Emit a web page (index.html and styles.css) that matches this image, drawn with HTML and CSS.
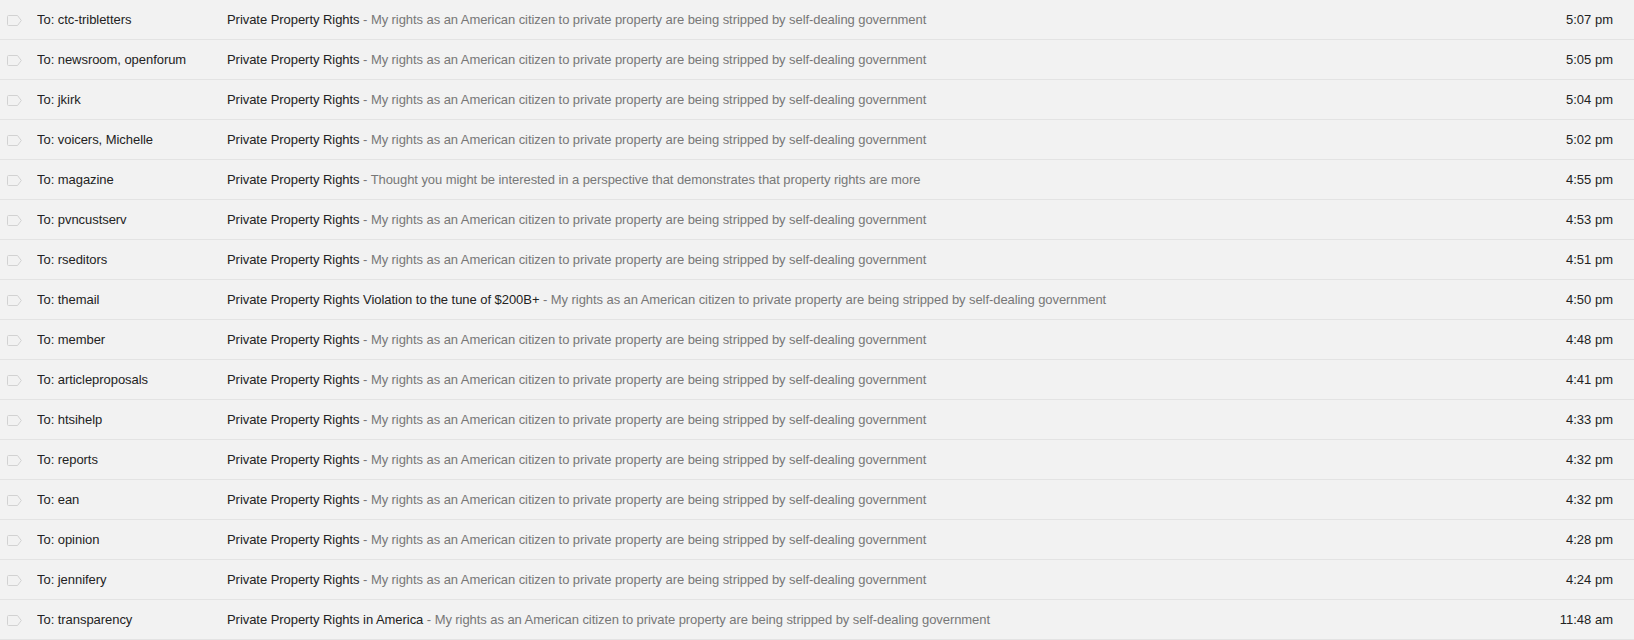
FILE: index.html
```html
<!DOCTYPE html>
<html lang="en">
<head>
    <meta charset="UTF-8">
    <title>Sent Mail</title>
    <link rel="stylesheet" href="styles.css">
</head>
<body>

    <div class="mail-list">
        <div class="row">
            <span class="marker"><svg width="15" height="11" viewBox="0 0 15 11"><path d="M1.5 0.5 H10.5 L14.3 5.5 L10.5 10.5 H1.5 Q0.5 10.5 0.5 9.5 V1.5 Q0.5 0.5 1.5 0.5 Z"/></svg></span>
            <span class="sender">To: ctc-tribletters</span>
            <span class="subject">Private Property Rights <span class="snippet">- My rights as an American citizen to private property are being stripped by self-dealing government</span></span>
            <span class="time">5:07 pm</span>
        </div>
        <div class="row">
            <span class="marker"><svg width="15" height="11" viewBox="0 0 15 11"><path d="M1.5 0.5 H10.5 L14.3 5.5 L10.5 10.5 H1.5 Q0.5 10.5 0.5 9.5 V1.5 Q0.5 0.5 1.5 0.5 Z"/></svg></span>
            <span class="sender">To: newsroom, openforum</span>
            <span class="subject">Private Property Rights <span class="snippet">- My rights as an American citizen to private property are being stripped by self-dealing government</span></span>
            <span class="time">5:05 pm</span>
        </div>
        <div class="row">
            <span class="marker"><svg width="15" height="11" viewBox="0 0 15 11"><path d="M1.5 0.5 H10.5 L14.3 5.5 L10.5 10.5 H1.5 Q0.5 10.5 0.5 9.5 V1.5 Q0.5 0.5 1.5 0.5 Z"/></svg></span>
            <span class="sender">To: jkirk</span>
            <span class="subject">Private Property Rights <span class="snippet">- My rights as an American citizen to private property are being stripped by self-dealing government</span></span>
            <span class="time">5:04 pm</span>
        </div>
        <div class="row">
            <span class="marker"><svg width="15" height="11" viewBox="0 0 15 11"><path d="M1.5 0.5 H10.5 L14.3 5.5 L10.5 10.5 H1.5 Q0.5 10.5 0.5 9.5 V1.5 Q0.5 0.5 1.5 0.5 Z"/></svg></span>
            <span class="sender">To: voicers, Michelle</span>
            <span class="subject">Private Property Rights <span class="snippet">- My rights as an American citizen to private property are being stripped by self-dealing government</span></span>
            <span class="time">5:02 pm</span>
        </div>
        <div class="row">
            <span class="marker"><svg width="15" height="11" viewBox="0 0 15 11"><path d="M1.5 0.5 H10.5 L14.3 5.5 L10.5 10.5 H1.5 Q0.5 10.5 0.5 9.5 V1.5 Q0.5 0.5 1.5 0.5 Z"/></svg></span>
            <span class="sender">To: magazine</span>
            <span class="subject">Private Property Rights <span class="snippet">- Thought you might be interested in a perspective that demonstrates that property rights are more</span></span>
            <span class="time">4:55 pm</span>
        </div>
        <div class="row">
            <span class="marker"><svg width="15" height="11" viewBox="0 0 15 11"><path d="M1.5 0.5 H10.5 L14.3 5.5 L10.5 10.5 H1.5 Q0.5 10.5 0.5 9.5 V1.5 Q0.5 0.5 1.5 0.5 Z"/></svg></span>
            <span class="sender">To: pvncustserv</span>
            <span class="subject">Private Property Rights <span class="snippet">- My rights as an American citizen to private property are being stripped by self-dealing government</span></span>
            <span class="time">4:53 pm</span>
        </div>
        <div class="row">
            <span class="marker"><svg width="15" height="11" viewBox="0 0 15 11"><path d="M1.5 0.5 H10.5 L14.3 5.5 L10.5 10.5 H1.5 Q0.5 10.5 0.5 9.5 V1.5 Q0.5 0.5 1.5 0.5 Z"/></svg></span>
            <span class="sender">To: rseditors</span>
            <span class="subject">Private Property Rights <span class="snippet">- My rights as an American citizen to private property are being stripped by self-dealing government</span></span>
            <span class="time">4:51 pm</span>
        </div>
        <div class="row">
            <span class="marker"><svg width="15" height="11" viewBox="0 0 15 11"><path d="M1.5 0.5 H10.5 L14.3 5.5 L10.5 10.5 H1.5 Q0.5 10.5 0.5 9.5 V1.5 Q0.5 0.5 1.5 0.5 Z"/></svg></span>
            <span class="sender">To: themail</span>
            <span class="subject">Private Property Rights Violation to the tune of $200B+ <span class="snippet">- My rights as an American citizen to private property are being stripped by self-dealing government</span></span>
            <span class="time">4:50 pm</span>
        </div>
        <div class="row">
            <span class="marker"><svg width="15" height="11" viewBox="0 0 15 11"><path d="M1.5 0.5 H10.5 L14.3 5.5 L10.5 10.5 H1.5 Q0.5 10.5 0.5 9.5 V1.5 Q0.5 0.5 1.5 0.5 Z"/></svg></span>
            <span class="sender">To: member</span>
            <span class="subject">Private Property Rights <span class="snippet">- My rights as an American citizen to private property are being stripped by self-dealing government</span></span>
            <span class="time">4:48 pm</span>
        </div>
        <div class="row">
            <span class="marker"><svg width="15" height="11" viewBox="0 0 15 11"><path d="M1.5 0.5 H10.5 L14.3 5.5 L10.5 10.5 H1.5 Q0.5 10.5 0.5 9.5 V1.5 Q0.5 0.5 1.5 0.5 Z"/></svg></span>
            <span class="sender">To: articleproposals</span>
            <span class="subject">Private Property Rights <span class="snippet">- My rights as an American citizen to private property are being stripped by self-dealing government</span></span>
            <span class="time">4:41 pm</span>
        </div>
        <div class="row">
            <span class="marker"><svg width="15" height="11" viewBox="0 0 15 11"><path d="M1.5 0.5 H10.5 L14.3 5.5 L10.5 10.5 H1.5 Q0.5 10.5 0.5 9.5 V1.5 Q0.5 0.5 1.5 0.5 Z"/></svg></span>
            <span class="sender">To: htsihelp</span>
            <span class="subject">Private Property Rights <span class="snippet">- My rights as an American citizen to private property are being stripped by self-dealing government</span></span>
            <span class="time">4:33 pm</span>
        </div>
        <div class="row">
            <span class="marker"><svg width="15" height="11" viewBox="0 0 15 11"><path d="M1.5 0.5 H10.5 L14.3 5.5 L10.5 10.5 H1.5 Q0.5 10.5 0.5 9.5 V1.5 Q0.5 0.5 1.5 0.5 Z"/></svg></span>
            <span class="sender">To: reports</span>
            <span class="subject">Private Property Rights <span class="snippet">- My rights as an American citizen to private property are being stripped by self-dealing government</span></span>
            <span class="time">4:32 pm</span>
        </div>
        <div class="row">
            <span class="marker"><svg width="15" height="11" viewBox="0 0 15 11"><path d="M1.5 0.5 H10.5 L14.3 5.5 L10.5 10.5 H1.5 Q0.5 10.5 0.5 9.5 V1.5 Q0.5 0.5 1.5 0.5 Z"/></svg></span>
            <span class="sender">To: ean</span>
            <span class="subject">Private Property Rights <span class="snippet">- My rights as an American citizen to private property are being stripped by self-dealing government</span></span>
            <span class="time">4:32 pm</span>
        </div>
        <div class="row">
            <span class="marker"><svg width="15" height="11" viewBox="0 0 15 11"><path d="M1.5 0.5 H10.5 L14.3 5.5 L10.5 10.5 H1.5 Q0.5 10.5 0.5 9.5 V1.5 Q0.5 0.5 1.5 0.5 Z"/></svg></span>
            <span class="sender">To: opinion</span>
            <span class="subject">Private Property Rights <span class="snippet">- My rights as an American citizen to private property are being stripped by self-dealing government</span></span>
            <span class="time">4:28 pm</span>
        </div>
        <div class="row">
            <span class="marker"><svg width="15" height="11" viewBox="0 0 15 11"><path d="M1.5 0.5 H10.5 L14.3 5.5 L10.5 10.5 H1.5 Q0.5 10.5 0.5 9.5 V1.5 Q0.5 0.5 1.5 0.5 Z"/></svg></span>
            <span class="sender">To: jennifery</span>
            <span class="subject">Private Property Rights <span class="snippet">- My rights as an American citizen to private property are being stripped by self-dealing government</span></span>
            <span class="time">4:24 pm</span>
        </div>
        <div class="row">
            <span class="marker"><svg width="15" height="11" viewBox="0 0 15 11"><path d="M1.5 0.5 H10.5 L14.3 5.5 L10.5 10.5 H1.5 Q0.5 10.5 0.5 9.5 V1.5 Q0.5 0.5 1.5 0.5 Z"/></svg></span>
            <span class="sender">To: transparency</span>
            <span class="subject">Private Property Rights in America <span class="snippet">- My rights as an American citizen to private property are being stripped by self-dealing government</span></span>
            <span class="time">11:48 am</span>
        </div>
    </div>

</body>
</html>
```

FILE: styles.css
```css
/* Lista de mensagens enviadas, estilo caixa de correio */
body {
    margin: 0;
    background-color: #f2f2f2;
    font-family: "Liberation Sans", Arial, sans-serif;
    font-size: 13px;
    color: #222;
}
.mail-list {
    width: 100%;
}
.row {
    display: flex;
    align-items: center;
    height: 39px;
    line-height: 39px;
    border-bottom: 1px solid #e3e3e3;
    white-space: nowrap;
}
.marker {
    width: 37px;
    padding-left: 7px;
    box-sizing: border-box;
    display: flex;
    align-items: center;
    height: 100%;
}
.marker svg {
    display: block;
    margin-top: 2px;
}
.marker path {
    fill: none;
    stroke: #d2d2d2; /* Cinza claro do marcador */
    stroke-width: 1;
}
.sender {
    width: 190px;
    overflow: hidden;
    letter-spacing: -0.05px;
}
.subject {
    flex: 1;
    overflow: hidden;
    letter-spacing: -0.05px;
}
.snippet {
    color: #777;
    letter-spacing: -0.07px;
}
.time {
    padding-right: 21px;
    padding-left: 20px;
    text-align: right;
}
```
